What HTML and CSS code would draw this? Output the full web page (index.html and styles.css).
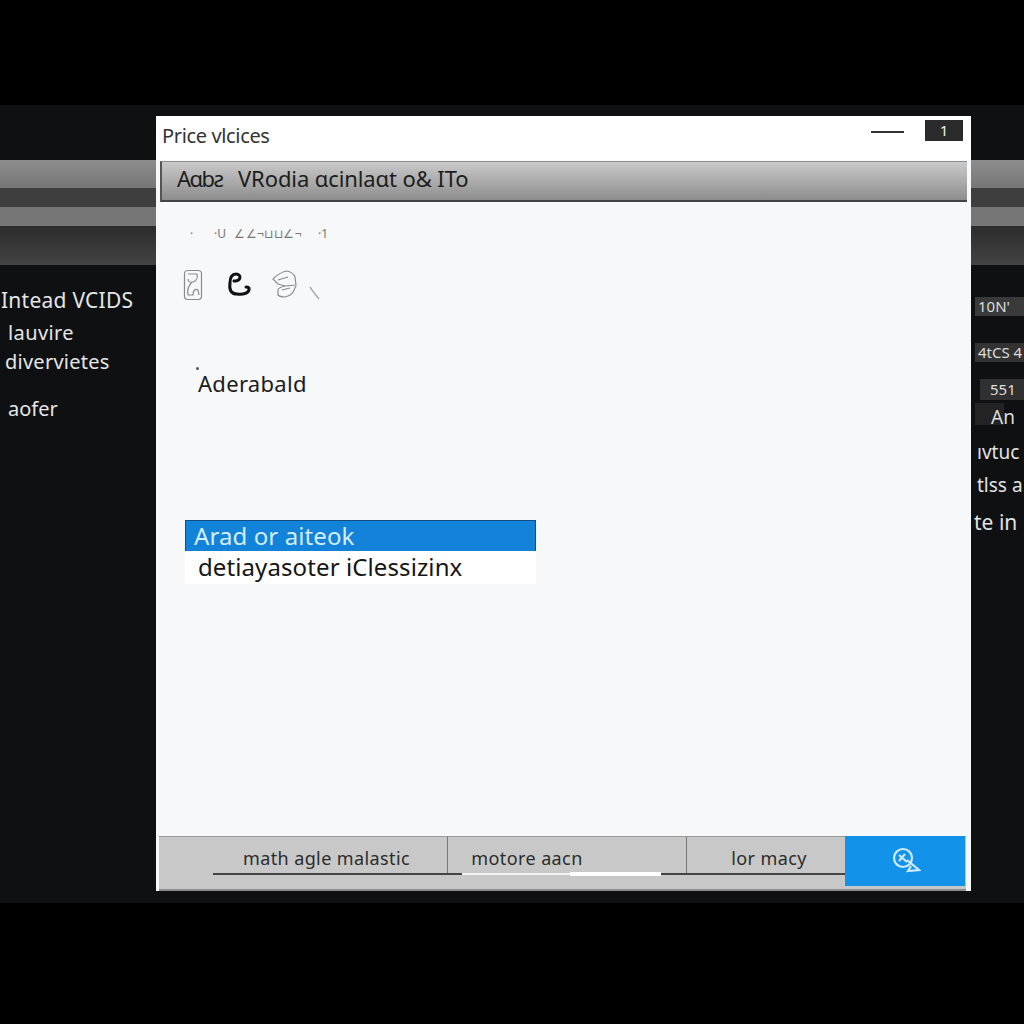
FILE: index.html
```html
<!DOCTYPE html>
<html lang="en">
<head>
<meta charset="utf-8">
<title>Price vlcices</title>
<link rel="stylesheet" href="styles.css">
</head>
<body>
<div class="stage">
  <aside class="side side-left">
    <div class="bands"><i class="band b1"></i><i class="band b2"></i><i class="band b3"></i><i class="band b4"></i></div>
    <p class="lt lt1">Intead VCIDS</p>
    <p class="lt lt2">lauvire</p>
    <p class="lt lt3">divervietes</p>
    <p class="lt lt4">aofer</p>
  </aside>
  <main class="window">
    <header class="titlebar">
      <span class="title">Price vlcices</span>
      <i class="min-line"></i>
      <span class="close-btn">1</span>
    </header>
    <div class="toolbar"><span class="tool-a">Aɑbƨ</span><span class="tool-b">VRodia ɑcinlaɑt o&amp; ITo</span></div>
    <section class="content">
      <div class="faint"><span class="f1">·</span><span class="f2">·U</span><span class="f3">∠∠¬⊔⊔∠¬</span><span class="f4">·1</span></div>
      <div class="icons">
        <svg class="ic1" width="20" height="32" viewBox="0 0 20 32" fill="none" stroke="#8b8b8b" stroke-width="1.2"><path d="M5 1.500h10c2 0 3.500 1 3.500 3v23c0 2-1.500 3-3.500 3H5c-2 0-3.500-1-3.500-3v-23c0-2 1.500-3 3.500-3z"/><path d="M5 5h9c1 4-1 7-4 8-3 1-5-1-5-3M9 13c-3 3-5 8-4 13h5c0-4 2-7 5-5l1 5"/></svg>
        <svg class="ic2" width="26" height="26" viewBox="0 0 26 26" fill="none" stroke="#111" stroke-width="3" stroke-linecap="round" stroke-linejoin="round"><path d="M7 9C14 10 15 2 9 2 4 2 3 6 3 11c-1 7 1 11 7 11 6 1 13-1 12-6-1-1-2-1-3-1"/></svg>
        <svg class="ic3" width="26" height="30" viewBox="0 0 26 30" fill="none" stroke="#8c8c8c" stroke-width="1.2" stroke-linejoin="round"><path d="M1 10C5 6 10 3 14 2c4 0 8 3 9 6l1 8-11 1-7-2-5-5z"/><path d="M13 17c-4 1-7 2-7 4v5c2 2 5 2 7 2 4-1 7-3 8-5l3-6M6 11l10-3M10 21l8-2"/></svg>
        <svg class="ic4" width="12" height="14" viewBox="0 0 12 14" fill="none" stroke="#a5a5a5" stroke-width="1.400"><path d="M1 1c2 3 3 5 5 7l4 5"/></svg>
      </div>
      <div class="label"><i class="dot"></i>Aderabald</div>
      <div class="listbox">
        <div class="opt opt-sel">Arad or aiteok</div>
        <div class="opt">detiayasoter iClessizinx</div>
      </div>
    </section>
    <footer class="footer">
      <div class="tab tab1">math agle malastic</div>
      <div class="tab tab2">motore aacn</div>
      <div class="tab tab3">lor macy</div>
      <button class="go" type="button" aria-label="Search">
        <svg width="32" height="28" viewBox="0 0 32 28" fill="none" stroke="#cfeaff" stroke-width="2.200"><circle cx="14" cy="11" r="9"/><path d="M10 8l8 7M16 7l-6 7M18 13l12 10-11 1 3-5"/></svg>
      </button>
      <i class="rule r1"></i><i class="rule r2"></i><i class="rule r3"></i><i class="rule r4"></i>
    </footer>
  </main>
  <aside class="side side-right">
    <div class="bands"><i class="band b1"></i><i class="band b2"></i><i class="band b3"></i><i class="band b4"></i></div>
    <div class="chip c1">10N'</div>
    <div class="chip c2">4tCS 4</div>
    <div class="chip c3">551</div>
    <div class="chip c4">An</div>
    <p class="rt rt1">ıvtuc</p>
    <p class="rt rt2">tlss a</p>
    <p class="rt rt3">te in</p>
  </aside>
</div>
</body>
</html>
```

FILE: styles.css
```css
* { box-sizing: border-box; }
html, body { margin: 0; height: 100%; }
body {
  background: #000;
  padding-top: 105px;
  overflow: hidden;
  font-family: "Noto Sans", "Open Sans", sans-serif;
}
.stage {
  height: 798px;
  background: #0e1012;
  display: flex;
  align-items: flex-start;
}
.side {
  flex: none;
  height: 100%;
  overflow: hidden;
  padding-top: 55px;
}
.side-left { width: 156px; }
.side-right { width: 53px; }
.bands { display: flex; flex-direction: column; }
.band { display: block; }
.b1 { height: 28px; background: linear-gradient(#8d8d8d, #767676); }
.b2 { height: 19px; background: #3e3e3e; }
.b3 { height: 19px; background: #767676; }
.b4 { height: 39px; background: linear-gradient(#2c2c2c, #434343); }

.lt { margin: 0; color: #e6e6e6; white-space: nowrap; line-height: 26px; }
.lt1 { font-size: 21px; margin: 22px 0 0 1px; letter-spacing: 0.25px; }
.lt2 { font-size: 20px; margin: 7px 0 0 8px; letter-spacing: 0.4px; }
.lt3 { font-size: 20px; margin: 3px 0 0 5px; letter-spacing: 0.25px; }
.lt4 { font-size: 20px; margin: 21px 0 0 8px; }

.window {
  flex: none;
  width: 815px;
  height: 775px;
  margin-top: 11px;
  background: #f7f8fa;
  display: flex;
  flex-direction: column;
}
.titlebar {
  flex: none;
  height: 44px;
  background: #fff;
  display: flex;
  align-items: center;
  padding: 0 8px 6px 6px;
}
.title { font-size: 20px; color: #333; letter-spacing: -0.35px; }
.min-line { width: 33px; height: 2px; background: #333; margin-left: auto; margin-right: 21px; margin-bottom: 6px; }
.close-btn {
  width: 38px;
  height: 21px;
  background: #2b2b2b;
  color: #eee;
  font-size: 15px;
  line-height: 21px;
  text-align: center;
  margin-bottom: 9px;
}
.toolbar {
  flex: none;
  height: 41px;
  margin: 1px 4px 0 4px;
  background: linear-gradient(#c9c9c9, #a9a9a9 55%, #8d8d8d);
  border-top: 1px solid #8e8e8e;
  border-left: 2px solid #555;
  border-bottom: 2px solid #444;
  display: flex;
  align-items: center;
  padding: 0 0 6px 15px;
  color: #1d1d1d;
  font-size: 22px;
  white-space: nowrap;
}
.tool-a { width: 61px; letter-spacing: -1.5px; }
.tool-b { letter-spacing: -0.1px; }
.content { flex: 1; padding: 25px 0 0 27px; }
.faint {
  display: flex;
  height: 14px;
  margin-left: 7px;
  color: #777;
  font-size: 12px;
  line-height: 14px;
  white-space: nowrap;
}
.f1 { width: 24px; }
.f2 { width: 20px; }
.f3 { width: 84px; letter-spacing: 0.5px; }
.icons { display: flex; align-items: flex-start; margin-top: 28px; height: 32px; }
.ic2 { margin: 3px 0 0 24px; }
.ic3 { margin: 0 0 0 19px; }
.ic4 { margin: 17px 0 0 11px; }
.label {
  position: relative;
  margin: 67px 0 0 15px;
  font-size: 22px;
  line-height: 30px;
  color: #1b1b1b;
  letter-spacing: 0.3px;
}
.dot {
  position: absolute;
  left: -2px;
  top: -1px;
  width: 3px;
  height: 3px;
  border-radius: 50%;
  background: #555;
}
.listbox {
  width: 351px;
  margin: 122px 0 0 2px;
  background: #fff;
}
.opt {
  height: 33px;
  padding-left: 13px;
  font-size: 24px;
  line-height: 31px;
  color: #151515;
  white-space: nowrap;
  letter-spacing: 0.1px;
}
.opt-sel {
  height: 31px;
  padding-left: 8px;
  line-height: 30px;
  background: #1283d8;
  border: 1px solid #124f80;
  border-bottom: 0;
  color: #d4edff;
}
.footer {
  position: relative;
  flex: none;
  height: 55px;
  margin: 0 5px 0 3px;
  display: flex;
  background: #c8c8c8;
  border-top: 1px solid #999;
  border-bottom: 2px solid #8c8c8c;
  color: #2c2c2c;
  font-size: 18px;
  letter-spacing: 0.4px;
}
.tab {
  height: 37px;
  line-height: 42px;
  border-right: 1px solid #777;
  white-space: nowrap;
  text-align: center;
}
.tab1 { width: 289px; padding-left: 47px; }
.tab2 { width: 239px; padding-right: 80px; }
.tab3 { width: 158px; padding-left: 6px; border-right: 0; }
.go {
  width: 120px;
  height: 50px;
  margin-top: -1px;
  padding: 0;
  border: 0;
  background: #1292e8;
  display: flex;
  align-items: center;
  justify-content: center;
}
.rule { position: absolute; display: block; height: 2px; top: 36px; background: #444; }
.r1 { left: 54px; width: 249px; }
.r2 { left: 303px; width: 108px; background: #f2f2f2; }
.r3 { left: 411px; width: 91px; height: 4px; top: 35px; background: #fff; }
.r4 { left: 502px; width: 184px; }

.chip {
  color: #ddd;
  font-size: 15px;
  white-space: nowrap;
  background: #3a3a3a;
}
.c1 { margin: 32px 0 0 4px; height: 19px; line-height: 19px; padding-left: 3px; }
.c2 { margin: 27px 0 0 4px; height: 19px; line-height: 19px; padding-left: 3px; background: #333; }
.c3 { margin: 17px 0 0 9px; height: 21px; line-height: 21px; padding-left: 10px; background: #303030; }
.c4 { margin: 3px 0 0 4px; width: 29px; height: 22px; line-height: 28px; padding-left: 16px; font-size: 19px; background: #232323; overflow: visible; }
.rt { margin: 0; color: #e2e2e2; white-space: nowrap; font-size: 19px; line-height: 26px; }
.rt1 { margin: 14px 0 0 6px; }
.rt2 { margin: 7px 0 0 6px; }
.rt3 { margin: 11px 0 0 3px; font-size: 21px; }
```
